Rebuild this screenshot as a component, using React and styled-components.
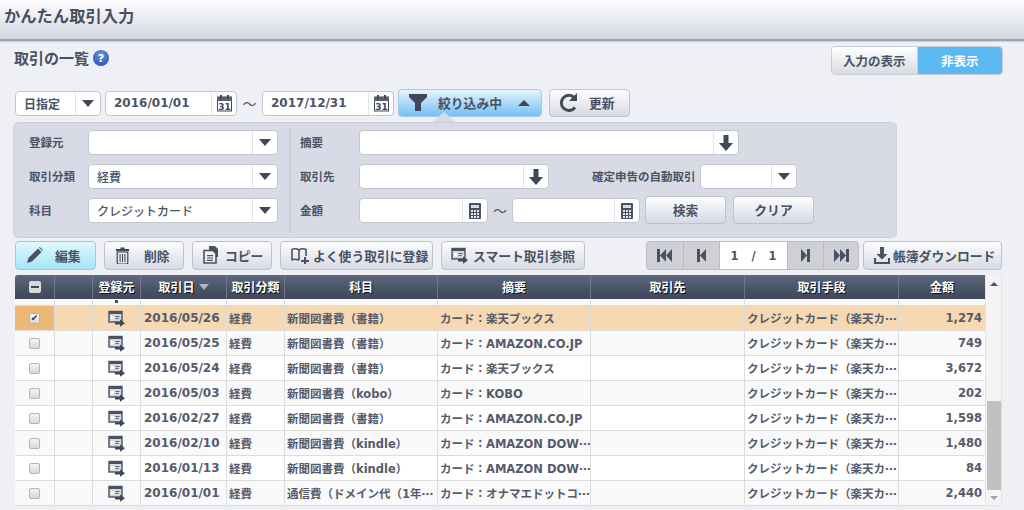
import React from 'react';
import styled, { createGlobalStyle, css } from 'styled-components';

const FONT = `"DejaVu Sans", "Noto Sans CJK JP", sans-serif`;
const JP = `"Noto Sans CJK JP", "Liberation Sans", sans-serif`;
const INK = '#4c5364';
const DARK = '#3f4759';
const COLS = '40px 38px 48px 86px 58px 153px 153px 154px 154px 86px';

const Global = createGlobalStyle`
  html, body { margin: 0; padding: 0; background: #eff0f5; }
  body { width: 1024px; height: 510px; overflow: hidden; font-family: ${JP}; color: ${INK}; }
  * { box-sizing: border-box; }
`;

const Header = styled.header`
  height: 41px; padding: 0 4px 9px; display: flex; align-items: center;
  background: linear-gradient(#fdfdfe, #d4d7e1);
  border-bottom: 2px solid #a0a3ab; box-shadow: 0 1px 1px #d0d2da;
  font-size: 16.3px; font-weight: 700; color: #4a4f5c;
`;
const Main = styled.main` padding: 5px 21px 0 15px; `;
const TitleRow = styled.div` display: flex; justify-content: space-between; align-items: flex-start; height: 29px; `;
const Title = styled.h2`
  margin: 3px 0 0 -1px; display: flex; align-items: center; gap: 4px;
  font-size: 15px; line-height: 18px; font-weight: 700; color: #4a5162;
`;
const Help = styled.span`
  width: 16px; height: 16px; border-radius: 50%; display: inline-flex; align-items: center; justify-content: center;
  background: radial-gradient(circle at 50% 30%, #6a94e2, #1a49ad); color: #fff; font: 700 11px ${FONT};
`;
const Toggle = styled.div`
  display: flex; width: 172px; height: 29px; border: 1px solid #ccced6; border-radius: 4px; overflow: hidden;
`;
const ToggleItem = styled.div`
  flex: 1; display: flex; align-items: center; justify-content: center; font-size: 12.5px; font-weight: 700;
  ${p => p.$on ? css`background: #5bb8f1; color: #fff;` : css`background: linear-gradient(#fff, #d8dae3); color: #4a5162; border-right: 1px solid #ccced6;`}
`;

const DateRow = styled.div` display: flex; align-items: center; height: 28px; margin-top: 14px; `;
const Field = styled.div`
  display: flex; align-items: center; height: 25px; width: ${p => p.$w}px; flex: none;
  margin-left: ${p => p.$ml || 0}px;
  background: #fff; border: 1px solid #c3c6d0; border-radius: 4px; overflow: hidden;
  font-size: 12px; color: ${INK}; font-weight: ${p => p.$bold ? 700 : 500};
`;
const FieldText = styled.span`
  flex: 1; padding-left: 8px; white-space: nowrap; font-family: ${p => p.$latin ? FONT : JP};
`;
const FieldEnd = styled.span`
  width: ${p => p.$w || 25}px; height: 100%; flex: none; display: flex; align-items: center; justify-content: center;
  border-left: 1px solid #e3e4e8;
`;
const Caret = styled.i`
  width: 0; height: 0; display: block; margin-left: ${p => p.$ml || 0}px;
  border-left: 6px solid transparent; border-right: 6px solid transparent;
  ${p => p.$up ? css`border-bottom: 6px solid ${DARK};` : css`border-top: 7px solid ${DARK};`}
`;
const Tilde = styled.span`
  width: ${p => p.$w || 25}px; flex: none; text-align: center; font-size: 14px; color: #555;
  line-height: ${p => p.$lh ? `${p.$lh}px` : 'normal'};
`;

const Button = styled.button`
  display: flex; align-items: center; justify-content: ${p => p.$tight ? 'center' : 'flex-start'}; flex: none;
  gap: ${p => p.$gap ?? 4}px;
  width: ${p => p.$w}px; height: ${p => p.$h || 29}px; margin: 0; margin-left: ${p => p.$ml || 0}px; margin-top: ${p => p.$mt || 0}px;
  margin-right: ${p => p.$mr || 0}px;
  padding: 0 0 1px ${p => p.$pl ?? 8}px;
  border: 1px solid #bfc2cc; border-radius: 4px;
  background: linear-gradient(#fdfdfe, #d7dae4);
  font-family: ${JP}; font-size: 12.8px; font-weight: 700; color: #4a5162; white-space: nowrap;
  ${p => p.$edit && css`background: linear-gradient(#e2f9ff, #a5e4f6); border-color: #7fd4ee;`}
  ${p => p.$filter && css`background: linear-gradient(#e8f4fd, #72c0f5); border-color: #a6cbe4; position: relative;`}
`;
const Notch = styled.i`
  position: absolute; left: 33px; bottom: -6px; width: 0; height: 0;
  border-left: 12px solid transparent; border-right: 12px solid transparent; border-bottom: 10px solid #d8dbe5;
`;

const Panel = styled.section`
  display: flex; width: 884px; height: 116px; margin: 5px 0 0 -2px; padding: 7px 0 0 15px;
  background: #d8dbe5; border: 1px solid #cdd0da; border-radius: 5px;
`;
const PanelLeft = styled.div` width: 249px; display: flex; flex-direction: column; gap: 9px; `;
const PanelRight = styled.div` display: flex; flex-direction: column; gap: 9px; padding-left: 9px; `;
const Divider = styled.div` width: 2px; height: 105px; margin: -2px 0 0 11px; background: #c8cbd5; `;
const FormRow = styled.div` display: flex; align-items: flex-start; height: 25px; `;
const Label = styled.label`
  width: ${p => p.$w}px; margin-left: ${p => p.$ml || 0}px; flex: none; line-height: 25px; font-size: 11.5px; font-weight: 700; color: #4c5364; white-space: nowrap;
`;

const ActionRow = styled.div` display: flex; align-items: center; height: 29px; margin-top: 3px; gap: 8px; `;
const Grow = styled.div` flex: 1; `;
const Pager = styled.div`
  display: flex; height: 29px; width: 213px; margin-right: -4px; border: 1px solid #bcbec6; border-radius: 4px; overflow: hidden; background: #cfd0d5;
`;
const PagerBtn = styled.span`
  width: ${p => p.$w}px; flex: none; display: flex; align-items: center; justify-content: center;
  border-right: ${p => p.$last ? 0 : '1px solid #b9bbc3'};
`;
const PagerNum = styled.span`
  width: 68px; flex: none; display: flex; align-items: center; justify-content: center; background: #fff; border-right: 1px solid #b9bbc3;
  font: 700 11.5px ${FONT}; color: ${INK}; word-spacing: 9px;
`;

const TableWrap = styled.div` display: flex; width: 987px; height: 231px; margin-top: 5px; overflow: hidden; `;
const Table = styled.div` width: 970px; flex: none; `;
const HeadRow = styled.div`
  display: grid; grid-template-columns: ${COLS}; height: 24px; border-radius: 3px 0 0 0;
  background: linear-gradient(#5d677c, #3e4658);
`;
const HeadCell = styled.div`
  display: flex; align-items: center; justify-content: center; gap: 4px; padding-bottom: 1px; border-right: 1px solid #6f7789;
  color: #fff; font-size: 12px; font-weight: 700; text-shadow: 1px 1px 0 #111; white-space: nowrap;
  &:last-child { border-right: 0; }
`;
const SortArrow = styled.i`
  width: 0; height: 0; border-left: 5px solid transparent; border-right: 5px solid transparent; border-top: 6px solid #aeb4c2;
`;
const MinusBox = styled.i`
  width: 12px; height: 12px; display: flex; align-items: center; justify-content: center; border-radius: 2px; background: #d8d9dc;
  &::after { content: ''; width: 8px; height: 2px; background: #3e4658; }
`;
const Stub = styled.div`
  display: grid; grid-template-columns: ${COLS}; height: 7px; background: #f9f9f9; border-bottom: 1px solid #dcdcdc; overflow: hidden;
`;
const StubCell = styled.div`
  border-right: 1px solid #dcdcdc; display: flex; justify-content: center; align-items: flex-end;
  &:last-child { border-right: 0; }
`;
const StubDot = styled.i` width: 3px; height: 3px; margin-bottom: 2px; display: block; background: #4a5162; `;
const Row = styled.div`
  display: grid; grid-template-columns: ${COLS}; height: 25px;
  background: ${p => p.$sel ? '#f6d8b2' : p.$alt ? '#f9f9f9' : '#fff'};
  border-bottom: 1px solid #dcdcdc;
`;
const Cell = styled.div`
  display: flex; align-items: center; padding: 0 ${p => p.$right ? 3 : 2}px 0 2px; min-width: 0; overflow: hidden; white-space: nowrap;
  border-right: 1px solid #dcdcdc; font-family: ${FONT}; font-size: 11.5px; font-weight: 700; color: #555b6b;
  ${p => p.$center && css`justify-content: center; padding: 0;`}
  ${p => p.$right && css`justify-content: flex-end;`}
  ${p => p.$date && css`font-size: 12px; padding-left: 3px;`}
  ${p => p.$mark && css`background: #ecb878;`}
  &:last-child { border-right: 0; }
`;
const Check = styled.span`
  width: 11px; height: 11px; border-radius: 2px; border: 1px solid #b4b4b4; display: flex; align-items: center; justify-content: center;
  background: linear-gradient(#f4f4f4, #d8d8d8); color: #333; font-size: 9px; line-height: 1; font-family: ${FONT};
`;

const Scroll = styled.div`
  width: 17px; flex: none; display: flex; flex-direction: column; align-items: center;
  background: #f4f4f4; border: 1px solid #e2e2e2; border-top: 0;
`;
const ScrollEnd = styled.div` height: ${p => p.$h}px; flex: none; display: flex; align-items: center; justify-content: center; `;
const ScrollArrow = styled.i`
  width: 0; height: 0; border-left: 4px solid transparent; border-right: 4px solid transparent;
  ${p => p.$up ? css`border-bottom: 4px solid #505050;` : css`border-top: 4px solid #a3a3a3;`}
`;
const ScrollGap = styled.div` flex: 1; `;
const Thumb = styled.div` width: 14px; height: 89px; flex: none; background: #c1c1c1; `;

const Calendar = () => (
  <svg width="17" height="18" viewBox="0 0 17 18">
    <rect x="1.5" y="3" width="14" height="14" fill="#fff" stroke="#3f4759" />
    <rect x="1" y="3" width="15" height="4" fill="#59606f" />
    <rect x="4" y="1" width="2" height="4" fill="#3f4759" /><rect x="11" y="1" width="2" height="4" fill="#3f4759" />
    <text x="8.5" y="15.5" textAnchor="middle" fontFamily={FONT} fontWeight="700" fontSize="9" fill="#3f4759">31</text>
  </svg>
);
const Calc = () => (
  <svg width="12" height="16" viewBox="0 0 12 16">
    <rect width="12" height="16" rx="1" fill="#4a5162" />
    <rect x="2" y="2" width="8" height="3" fill="#d8dbe5" />
    {[7, 10, 13].map(y => [2, 5, 8].map(x => <rect key={`${x}${y}`} x={x} y={y} width="2" height="2" fill="#e8e9ee" />))}
  </svg>
);
const ArrowDown = () => (
  <svg width="14" height="16" viewBox="0 0 14 16"><path d="M4.5 0h5v8H14l-7 8-7-8h4.5z" fill={DARK} /></svg>
);
const Funnel = () => (
  <svg width="18" height="17" viewBox="0 0 18 17"><path d="M0 0h18v3l-6 6v8H6V9L0 3z" fill={DARK} /></svg>
);
const Refresh = () => (
  <svg width="20" height="20" viewBox="0 0 20 20">
    <path d="M16 14.5A7.6 7.6 0 1 1 15.4 4.6" fill="none" stroke="#424a5c" strokeWidth="3" />
    <path d="M18 0v8h-8z" fill="#424a5c" />
  </svg>
);
const Pencil = () => (
  <svg width="16" height="16" viewBox="0 0 16 16"><path d="M0 16l1.4-5L11 1.5 14.5 5 5 14.6zM12 .5l.8-.5L16 3.2l-.5.8z" fill="#4a5162" /></svg>
);
const Trash = () => (
  <svg width="13" height="17" viewBox="0 0 13 17">
    <path d="M4.5 .5h4v1.5H13v2.2H0V2h4.5z" fill="#3f4759" />
    <path d="M1.2 5h10.6v10.5a1.5 1.5 0 0 1-1.5 1.5H2.7a1.5 1.5 0 0 1-1.5-1.5z" fill="#e6e8ee" stroke="#3f4759" strokeWidth="1.2" />
    <path d="M3.6 7h1v8h-1zM6 7h1v8H6zM8.4 7h1v8h-1z" fill="#3f4759" />
  </svg>
);
const CopyIcon = () => (
  <svg width="16" height="18" viewBox="0 0 16 18">
    <path d="M6 0h6l3 3v8H6z" fill="#4a5162" />
    <path d="M1 4.5h9l3 3V17H1z" fill="#eef0f4" stroke="#4a5162" strokeWidth="1.6" />
    <path d="M4 9h6v1.2H4zm0 2.4h6v1.2H4zm0 2.4h6V15H4z" fill="#4a5162" />
  </svg>
);
const BookPlus = () => (
  <svg width="18" height="17" viewBox="0 0 18 17">
    <path d="M8 3C6 1.6 3 1.6 1 2.4v10.4c2-.6 5-.6 7 .6m0-10.4c2-1.4 5-1.4 7-.6V9M8 3v10" fill="none" stroke="#4a5162" strokeWidth="1.6" />
    <path d="M13 10h2v3h3v2h-3v2h-2v-2h-3v-2h3z" fill="#4a5162" />
  </svg>
);
const CardArrow = () => (
  <svg width="17" height="17" viewBox="0 0 17 17">
    <rect x="1" y="1.5" width="13" height="10.5" fill="#d5d8df" stroke="#4a5162" strokeWidth="1.4" />
    <rect x="1" y="1" width="13" height="3" fill="#4a5162" />
    <rect x="3" y="6" width="3" height="3.4" fill="#fff" />
    <path d="M7.5 6h4v1h-4zM7.5 8h3v1h-3z" fill="#5f6677" />
    <path d="M7 12h5V9.5l5 3.7-5 3.6v-2.3H7z" fill="#3f4759" />
  </svg>
);
const DownloadIcon = () => (
  <svg width="16" height="17" viewBox="0 0 16 17">
    <path d="M6 0h4v7h3.5L8 12.5 2.5 7H6z" fill="#4a5162" />
    <path d="M1 11v5h14v-5" fill="none" stroke="#4a5162" strokeWidth="2" />
  </svg>
);
const PageIcon = ({ d }) => (
  <svg width="17" height="13" viewBox="0 0 17 13"><path d={d} fill="#4a5162" /></svg>
);

const ROWS = [
  ['2016/05/26', '新聞図書費（書籍）', 'カード：楽天ブックス', '1,274'],
  ['2016/05/25', '新聞図書費（書籍）', 'カード：AMAZON.CO.JP', '749'],
  ['2016/05/24', '新聞図書費（書籍）', 'カード：楽天ブックス', '3,672'],
  ['2016/05/03', '新聞図書費（kobo）', 'カード：KOBO', '202'],
  ['2016/02/27', '新聞図書費（書籍）', 'カード：AMAZON.CO.JP', '1,598'],
  ['2016/02/10', '新聞図書費（kindle）', 'カード：AMAZON DOW⋯', '1,480'],
  ['2016/01/13', '新聞図書費（kindle）', 'カード：AMAZON DOW⋯', '84'],
  ['2016/01/01', '通信費（ドメイン代（1年⋯', 'カード：オナマエドットコ⋯', '2,440'],
];
const HEADS = ['登録元', '取引日', '取引分類', '科目', '摘要', '取引先', '取引手段', '金額'];

export default function App() {
  return (
    <>
      <Global />
      <Header>かんたん取引入力</Header>
      <Main>
        <TitleRow>
          <Title>取引の一覧<Help>?</Help></Title>
          <Toggle>
            <ToggleItem>入力の表示</ToggleItem>
            <ToggleItem $on>非表示</ToggleItem>
          </Toggle>
        </TitleRow>

        <DateRow>
          <Field $w={86} $bold><FieldText>日指定</FieldText><FieldEnd><Caret /></FieldEnd></Field>
          <Field $w={132} $ml={4} $bold><FieldText $latin>2016/01/01</FieldText><FieldEnd><Calendar /></FieldEnd></Field>
          <Tilde>～</Tilde>
          <Field $w={132} $bold><FieldText $latin>2017/12/31</FieldText><FieldEnd><Calendar /></FieldEnd></Field>
          <Button $filter $w={144} $h={28} $ml={4} $pl={10} $gap={11}>
            <Funnel />絞り込み中<Caret $up $ml={5} />
            <Notch />
          </Button>
          <Button $w={81} $h={28} $ml={7} $pl={9} $gap={10}><Refresh />更新</Button>
        </DateRow>

        <Panel>
          <PanelLeft>
            <FormRow><Label $w={59}>登録元</Label><Field $w={190}><FieldText /><FieldEnd><Caret /></FieldEnd></Field></FormRow>
            <FormRow><Label $w={59}>取引分類</Label><Field $w={190}><FieldText>経費</FieldText><FieldEnd><Caret /></FieldEnd></Field></FormRow>
            <FormRow><Label $w={59}>科目</Label><Field $w={190}><FieldText>クレジットカード</FieldText><FieldEnd><Caret /></FieldEnd></Field></FormRow>
          </PanelLeft>
          <Divider />
          <PanelRight>
            <FormRow><Label $w={59}>摘要</Label><Field $w={380}><FieldText /><FieldEnd><ArrowDown /></FieldEnd></Field></FormRow>
            <FormRow>
              <Label $w={59}>取引先</Label><Field $w={190}><FieldText /><FieldEnd><ArrowDown /></FieldEnd></Field>
              <Label $w={108} $ml={43}>確定申告の自動取引</Label><Field $w={97}><FieldText /><FieldEnd><Caret /></FieldEnd></Field>
            </FormRow>
            <FormRow>
              <Label $w={59}>金額</Label>
              <Field $w={129}><FieldText /><FieldEnd><Calc /></FieldEnd></Field>
              <Tilde $w={24} $lh={25}>～</Tilde>
              <Field $w={128}><FieldText /><FieldEnd><Calc /></FieldEnd></Field>
              <Button $tight $w={81} $h={28} $ml={5} $mt={-2} $pl={0}>検索</Button>
              <Button $tight $w={81} $h={28} $ml={7} $mt={-2} $pl={0}>クリア</Button>
            </FormRow>
          </PanelRight>
        </Panel>

        <ActionRow>
          <Button $edit $w={81} $pl={11} $gap={12}><Pencil />編集</Button>
          <Button $w={80} $pl={11} $gap={15}><Trash />削除</Button>
          <Button $w={80} $pl={10} $gap={6}><CopyIcon />コピー</Button>
          <Button $w={153} $pl={10} $gap={4}><BookPlus />よく使う取引に登録</Button>
          <Button $w={144} $pl={9} $gap={5}><CardArrow />スマート取引参照</Button>
          <Grow />
          <Pager>
            <PagerBtn $w={37}><PageIcon d="M0 0h3v13H0zM9 0v13L3 6.5zM15 0v13L9 6.5z" /></PagerBtn>
            <PagerBtn $w={36}><PageIcon d="M4 0h3v13H4zM13 0v13L7 6.5z" /></PagerBtn>
            <PagerNum>1 / 1</PagerNum>
            <PagerBtn $w={36}><PageIcon d="M4 0v13l6-6.5zM10 0h3v13h-3z" /></PagerBtn>
            <PagerBtn $w={35} $last><PageIcon d="M1 0v13l6-6.5zM7 0v13l6-6.5zM13 0h3v13h-3z" /></PagerBtn>
          </Pager>
          <Button $w={139} $pl={10} $gap={3} $mr={1}><DownloadIcon />帳簿ダウンロード</Button>
        </ActionRow>

        <TableWrap>
          <Table>
            <HeadRow>
              <HeadCell><MinusBox /></HeadCell>
              <HeadCell />
              {HEADS.map(h => (
                <HeadCell key={h}>{h}{h === '取引日' && <SortArrow />}</HeadCell>
              ))}
            </HeadRow>
            <Stub>
              {Array.from({ length: 10 }, (_, i) => <StubCell key={i}>{i === 2 && <StubDot />}</StubCell>)}
            </Stub>
            {ROWS.map((r, i) => (
              <Row key={r[0]} $sel={i === 0} $alt={i % 2 === 1}>
                <Cell $center $mark={i === 0}><Check>{i === 0 ? '✔' : ''}</Check></Cell>
                <Cell />
                <Cell $center><CardArrow /></Cell>
                <Cell $date>{r[0]}</Cell>
                <Cell>経費</Cell>
                <Cell>{r[1]}</Cell>
                <Cell>{r[2]}</Cell>
                <Cell />
                <Cell>クレジットカード（楽天カ⋯</Cell>
                <Cell $right>{r[3]}</Cell>
              </Row>
            ))}
          </Table>
          <Scroll>
            <ScrollEnd $h={17}><ScrollArrow $up /></ScrollEnd>
            <ScrollGap />
            <Thumb />
            <ScrollEnd $h={15}><ScrollArrow /></ScrollEnd>
          </Scroll>
        </TableWrap>
      </Main>
    </>
  );
}
